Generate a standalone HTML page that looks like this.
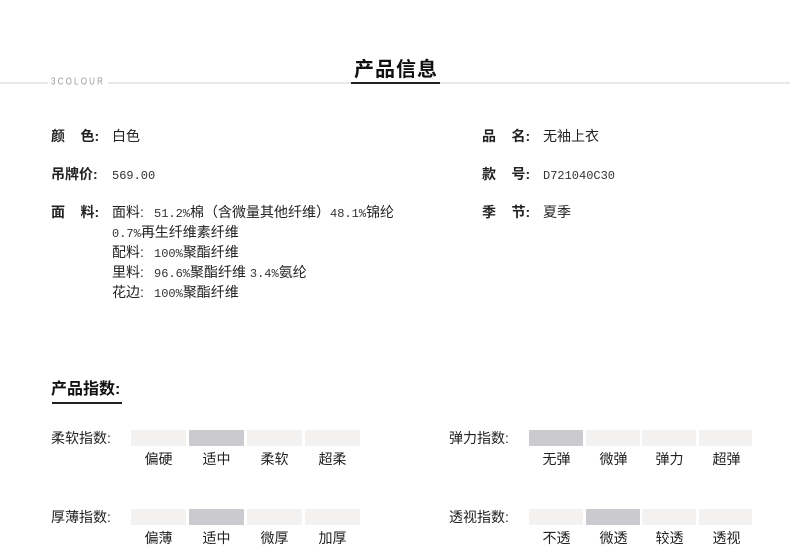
<!DOCTYPE html>
<html><head><meta charset="utf-8"><style>
*{margin:0;padding:0;box-sizing:border-box}
body{width:790px;height:551px;background:#fff;position:relative;overflow:hidden;font-family:"Liberation Sans","Noto Sans CJK SC",sans-serif;color:#222}
.a{position:absolute;white-space:nowrap}
.t{font-size:14px;line-height:20px}
.b{font-weight:bold}
.l{display:inline-block;width:61px;font-weight:bold}
.n{font-family:"Liberation Mono","Noto Sans CJK SC",monospace;font-size:12px;color:#333}
.c{display:inline-block;width:14px}
.bar{position:absolute;height:16px;background:#f3f2f1}
.on{background:#cbcbcf}
.lb{position:absolute;font-size:14px;line-height:16px;width:55px;text-align:center;color:#222}
</style></head><body>
<div class="a" style="left:0;top:82px;width:790px;height:2px;background:#e8e8e8"></div>
<div class="a" style="left:48px;top:77px;padding:0 3px;background:#fff;font-size:8px;letter-spacing:2.2px;color:#999;line-height:10px;transform:scaleY(1.3)">3COLOUR</div>
<div class="a b" style="left:354px;top:57px;font-size:20px;line-height:26px;letter-spacing:1px;color:#111">产品信息</div>
<div class="a" style="left:351px;top:82px;width:89px;height:2px;background:#222"></div>

<div class="a t" style="left:51px;top:126px"><span class="l">颜&nbsp;&nbsp;&nbsp;&nbsp;色:</span>白色</div>
<div class="a t" style="left:51px;top:164px"><span class="l">吊牌价:</span><span class="n">569.00</span></div>
<div class="a t" style="left:51px;top:202px"><span class="l">面&nbsp;&nbsp;&nbsp;&nbsp;料:</span>面料<span class="c">:</span><span class="n">51.2%</span>棉（含微量其他纤维）<span class="n">48.1%</span>锦纶</div>
<div class="a t" style="left:112px;top:222px"><span class="n">0.7%</span>再生纤维素纤维</div>
<div class="a t" style="left:112px;top:242px">配料<span class="c">:</span><span class="n">100%</span>聚酯纤维</div>
<div class="a t" style="left:112px;top:262px">里料<span class="c">:</span><span class="n">96.6%</span>聚酯纤维 <span class="n">3.4%</span>氨纶</div>
<div class="a t" style="left:112px;top:282px">花边<span class="c">:</span><span class="n">100%</span>聚酯纤维</div>

<div class="a t" style="left:482px;top:126px"><span class="l">品&nbsp;&nbsp;&nbsp;&nbsp;名:</span>无袖上衣</div>
<div class="a t" style="left:482px;top:164px"><span class="l">款&nbsp;&nbsp;&nbsp;&nbsp;号:</span><span class="n">D721040C30</span></div>
<div class="a t" style="left:482px;top:202px"><span class="l">季&nbsp;&nbsp;&nbsp;&nbsp;节:</span>夏季</div>

<div class="a b" style="left:51px;top:379px;font-size:16px;line-height:22px;color:#111">产品指数:</div>
<div class="a" style="left:52px;top:402px;width:70px;height:2px;background:#222"></div>

<div class="a t" style="left:51px;top:428px">柔软指数<span class="c">:</span></div>
<div class="bar" style="left:131px;top:430px;width:55px"></div>
<div class="bar on" style="left:189px;top:430px;width:55px"></div>
<div class="bar" style="left:247px;top:430px;width:55px"></div>
<div class="bar" style="left:305px;top:430px;width:55px"></div>
<div class="lb" style="left:131px;top:451px">偏硬</div>
<div class="lb" style="left:189px;top:451px">适中</div>
<div class="lb" style="left:247px;top:451px">柔软</div>
<div class="lb" style="left:305px;top:451px">超柔</div>

<div class="a t" style="left:51px;top:507px">厚薄指数<span class="c">:</span></div>
<div class="bar" style="left:131px;top:509px;width:55px"></div>
<div class="bar on" style="left:189px;top:509px;width:55px"></div>
<div class="bar" style="left:247px;top:509px;width:55px"></div>
<div class="bar" style="left:305px;top:509px;width:55px"></div>
<div class="lb" style="left:131px;top:530px">偏薄</div>
<div class="lb" style="left:189px;top:530px">适中</div>
<div class="lb" style="left:247px;top:530px">微厚</div>
<div class="lb" style="left:305px;top:530px">加厚</div>

<div class="a t" style="left:449px;top:428px">弹力指数<span class="c">:</span></div>
<div class="bar on" style="left:529px;top:430px;width:54px"></div>
<div class="bar" style="left:586px;top:430px;width:54px"></div>
<div class="bar" style="left:642px;top:430px;width:54px"></div>
<div class="bar" style="left:699px;top:430px;width:53px"></div>
<div class="lb" style="left:529px;top:451px">无弹</div>
<div class="lb" style="left:586px;top:451px">微弹</div>
<div class="lb" style="left:642px;top:451px">弹力</div>
<div class="lb" style="left:699px;top:451px">超弹</div>

<div class="a t" style="left:449px;top:507px">透视指数<span class="c">:</span></div>
<div class="bar" style="left:529px;top:509px;width:54px"></div>
<div class="bar on" style="left:586px;top:509px;width:54px"></div>
<div class="bar" style="left:642px;top:509px;width:54px"></div>
<div class="bar" style="left:699px;top:509px;width:53px"></div>
<div class="lb" style="left:529px;top:530px">不透</div>
<div class="lb" style="left:586px;top:530px">微透</div>
<div class="lb" style="left:642px;top:530px">较透</div>
<div class="lb" style="left:699px;top:530px">透视</div>
</body></html>
